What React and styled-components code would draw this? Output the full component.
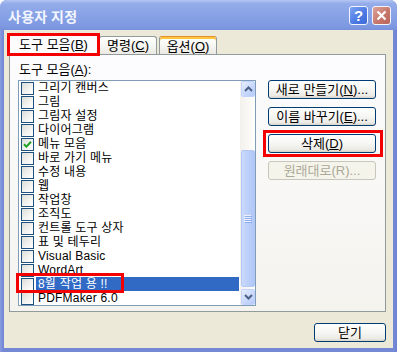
import React from 'react';
import styled, { createGlobalStyle } from 'styled-components';

const Global = createGlobalStyle`
  html, body { margin: 0; padding: 0; background: #ffffff; }
  body { font-family: "Liberation Sans", "Noto Sans CJK KR", sans-serif; font-size: 12px; }
  * { box-sizing: border-box; }
`;

const Window = styled.div`
  position: relative;
  width: 397px;
  height: 352px;
  display: flex;
  flex-direction: column;
  background: linear-gradient(to right, #8A9CE0, #7489D6 3px, #7489D6 calc(100% - 3px), #6E82CF);
  border-radius: 7px 7px 0 0;
  overflow: hidden;
`;

const TitleBar = styled.div`
  height: 30px;
  flex: none;
  display: flex;
  align-items: center;
  gap: 4px;
  padding: 0 6px 0 8px;
  background: linear-gradient(to bottom, #B4C6F3 0%, #94ACEA 12%, #89A3E6 45%, #7F9AE2 85%, #7790DB 100%);
`;

const Title = styled.div`
  flex: 1;
  color: #F3F6FE;
  font-family: "Noto Sans CJK KR", sans-serif;
  font-weight: bold;
  font-size: 14px;
  letter-spacing: 0.3px;
  line-height: 16px;
  padding-top: 1px;
`;

const CaptionButton = styled.div`
  width: 19px;
  height: 19px;
  border: 1px solid #F2F4FC;
  border-radius: 3px;
  background: ${p => (p.$close
    ? 'linear-gradient(135deg, #DCA39B, #C67468 60%, #B9665C)'
    : 'linear-gradient(135deg, #7FA2F2, #4A78E3 60%, #3E6AD8)')};
  display: flex;
  align-items: center;
  justify-content: center;
  color: #ffffff;
  font-family: "Liberation Sans", sans-serif;
  font-weight: bold;
  font-size: 15px;
  line-height: 15px;
`;

const Client = styled.div`
  flex: 1;
  margin: 0 4px 4px 4px;
  background: #ECE9D8;
  padding: 3px 7px 0 5px;
  display: flex;
  flex-direction: column;
`;

const TabStrip = styled.div`
  position: relative;
  z-index: 1;
  height: 22px;
  display: flex;
  align-items: flex-end;
  margin: 0 0 -1px -1px;
`;

const Tab = styled.div`
  width: ${p => p.$w}px;
  height: ${p => (p.$active ? 22 : 18)}px;
  margin-bottom: ${p => (p.$active ? 0 : 1)}px;
  margin-left: ${p => p.$gap || 0}px;
  border: 1px solid #919B9C;
  border-bottom: none;
  border-top-color: ${p => (p.$hot ? '#E68B2C' : '#919B9C')};
  border-radius: 3px 3px 0 0;
  background: ${p => (p.$active ? '#FCFCFE' : 'linear-gradient(#FFFFFF, #F5F5F1 55%, #EAE9E3)')};
  box-shadow: ${p => (p.$hot ? 'inset 0 2px 0 #FFC73C' : 'none')};
  display: flex;
  align-items: center;
  justify-content: center;
  padding-top: ${p => (p.$hot ? 2 : 0)}px;
  color: #000000;
  font-size: 13px;
  line-height: 15px;
  white-space: nowrap;
`;

const Panel = styled.div`
  height: 258px;
  border: 1px solid #919B9C;
  background: linear-gradient(#FCFCFE, #F4F3EE);
  padding: 7px 8px 0 8px;
  display: grid;
  grid-template-columns: 238px 108px;
  grid-template-rows: 15px auto;
  column-gap: 12px;
  row-gap: 3px;
  align-content: start;
`;

const FieldLabel = styled.div`
  grid-column: 1 / -1;
  color: #000000;
  font-size: 13px;
  line-height: 15px;
  padding-left: 1px;
`;

const ListBox = styled.div`
  height: 226px;
  border: 1px solid #7F9DB9;
  background: #ffffff;
  display: flex;
  overflow: hidden;
`;

const Rows = styled.div`
  flex: 1;
  display: flex;
  flex-direction: column;
`;

const Row = styled.div`
  height: 14px;
  flex: none;
  display: flex;
  align-items: center;
  padding-left: 2px;
  padding-right: 1px;
`;

const Check = styled.div`
  width: 13px;
  height: 13px;
  flex: none;
  border: 1px solid #1C5180;
  background: linear-gradient(135deg, #DCDCD7, #F4F4F2 60%, #FFFFFF);
  display: flex;
  align-items: center;
  justify-content: center;
`;

const ItemText = styled.span`
  flex: 1;
  margin-left: 2px;
  padding-left: 2px;
  height: 14px;
  line-height: 14px;
  font-size: 12px;
  letter-spacing: 0.2px;
  white-space: nowrap;
  color: ${p => (p.$selected ? '#ffffff' : '#000000')};
  background: ${p => (p.$selected ? '#316AC5' : 'transparent')};
`;

const ScrollBar = styled.div`
  width: 15px;
  flex: none;
  display: flex;
  flex-direction: column;
  background: linear-gradient(to right, #F3F1EC, #FEFEFB);
  padding-left: 1px;
`;

const ScrollBtn = styled.div`
  height: 16px;
  flex: none;
  border: 1px solid #C3D3FD;
  border-radius: 2px;
  background: linear-gradient(135deg, #E6EEFD, #C6D7FC 60%, #B7CBF8);
  display: flex;
  align-items: center;
  justify-content: center;
`;

const TrackGap = styled.div`
  flex: ${p => (p.$fill ? 1 : 'none')};
  height: ${p => (p.$h ? `${p.$h}px` : 'auto')};
`;

const Thumb = styled.div`
  height: 137px;
  flex: none;
  border: 1px solid #B4C8F6;
  border-radius: 2px;
  background: linear-gradient(to right, #CBDAFC, #BCCFFA 50%, #B2C7F7);
  display: flex;
  align-items: center;
  justify-content: center;
`;

const ButtonColumn = styled.div`
  display: flex;
  flex-direction: column;
  gap: 8px;
`;

const Button = styled.div`
  width: ${p => p.$w || 108}px;
  height: 19px;
  border: 1px solid ${p => (p.$disabled ? '#C9C7BA' : '#003C74')};
  border-radius: 3px;
  background: ${p => (p.$disabled
    ? '#F5F4EA'
    : 'linear-gradient(#FFFFFF, #F7F7F4 45%, #ECEBE6 85%, #D8D3C8)')};
  color: ${p => (p.$disabled ? '#ACA899' : '#000000')};
  display: flex;
  align-items: center;
  justify-content: center;
  font-size: 13px;
  line-height: 15px;
  white-space: nowrap;
`;

const Footer = styled.div`
  display: flex;
  justify-content: flex-end;
  margin-top: 11px;
`;

const Mark = styled.div`
  position: absolute;
  left: ${p => p.$x}px;
  top: ${p => p.$y}px;
  width: ${p => p.$w}px;
  height: ${p => p.$h}px;
  border: 3px solid #F40000;
  pointer-events: none;
  z-index: 5;
`;

const items = [
  { t: '그리기 캔버스' },
  { t: '그림' },
  { t: '그림자 설정' },
  { t: '다이어그램' },
  { t: '메뉴 모음', checked: true },
  { t: '바로 가기 메뉴' },
  { t: '수정 내용' },
  { t: '웹' },
  { t: '작업창' },
  { t: '조직도' },
  { t: '컨트롤 도구 상자' },
  { t: '표 및 테두리' },
  { t: 'Visual Basic' },
  { t: 'WordArt' },
  { t: '8월 작업 용 !!', selected: true },
  { t: 'PDFMaker 6.0' },
];

const CheckMark = () => (
  <svg width="9" height="9" viewBox="0 0 9 9">
    <path d="M1 4.2 L3.4 6.6 L8 1.8" fill="none" stroke="#21A121" strokeWidth="2" />
  </svg>
);

const Arrow = ({ up }) => (
  <svg width="9" height="6" viewBox="0 0 9 6">
    <path d={up ? 'M1 5 L4.5 1.5 L8 5' : 'M1 1 L4.5 4.5 L8 1'} fill="none" stroke="#4D6185" strokeWidth="2" />
  </svg>
);

const Grip = () => (
  <svg width="8" height="8" viewBox="0 0 8 8">
    {[0, 2, 4, 6].map(y => (
      <g key={y}>
        <rect x="0" y={y} width="7" height="1" fill="#EEF4FE" />
        <rect x="1" y={y + 1} width="7" height="1" fill="#8CABF2" />
      </g>
    ))}
  </svg>
);

export default function App() {
  return (
    <>
      <Global />
      <Window>
        <TitleBar>
          <Title>사용자 지정</Title>
          <CaptionButton>?</CaptionButton>
          <CaptionButton $close>
            <svg width="11" height="11" viewBox="0 0 11 11">
              <path d="M1.5 1.5 L9.5 9.5 M9.5 1.5 L1.5 9.5" stroke="#ffffff" strokeWidth="2.2" />
            </svg>
          </CaptionButton>
        </TitleBar>
        <Client>
          <TabStrip>
            <Tab $active $w={91}>도구 모음(<u>B</u>)</Tab>
            <Tab $w={58}>명령(<u>C</u>)</Tab>
            <Tab $hot $w={58} $gap={2}>옵션(<u>O</u>)</Tab>
          </TabStrip>
          <Panel>
            <FieldLabel>도구 모음(<u>A</u>):</FieldLabel>
            <ListBox>
              <Rows>
                {items.map(it => (
                  <Row key={it.t}>
                    <Check>{it.checked && <CheckMark />}</Check>
                    <ItemText $selected={it.selected}>{it.t}</ItemText>
                  </Row>
                ))}
              </Rows>
              <ScrollBar>
                <ScrollBtn><Arrow up /></ScrollBtn>
                <TrackGap $h={53} />
                <Thumb><Grip /></Thumb>
                <TrackGap $fill />
                <ScrollBtn><Arrow /></ScrollBtn>
              </ScrollBar>
            </ListBox>
            <ButtonColumn>
              <Button>새로 만들기(<u>N</u>)...</Button>
              <Button>이름 바꾸기(<u>E</u>)...</Button>
              <Button>삭제(<u>D</u>)</Button>
              <Button $disabled>원래대로(R)...</Button>
            </ButtonColumn>
          </Panel>
          <Footer>
            <Button $w={72}>닫기</Button>
          </Footer>
        </Client>
        <Mark $x={7} $y={33} $w={93} $h={23} />
        <Mark $x={263} $y={130} $w={120} $h={27} />
        <Mark $x={16} $y={273} $w={108} $h={20} />
      </Window>
    </>
  );
}
